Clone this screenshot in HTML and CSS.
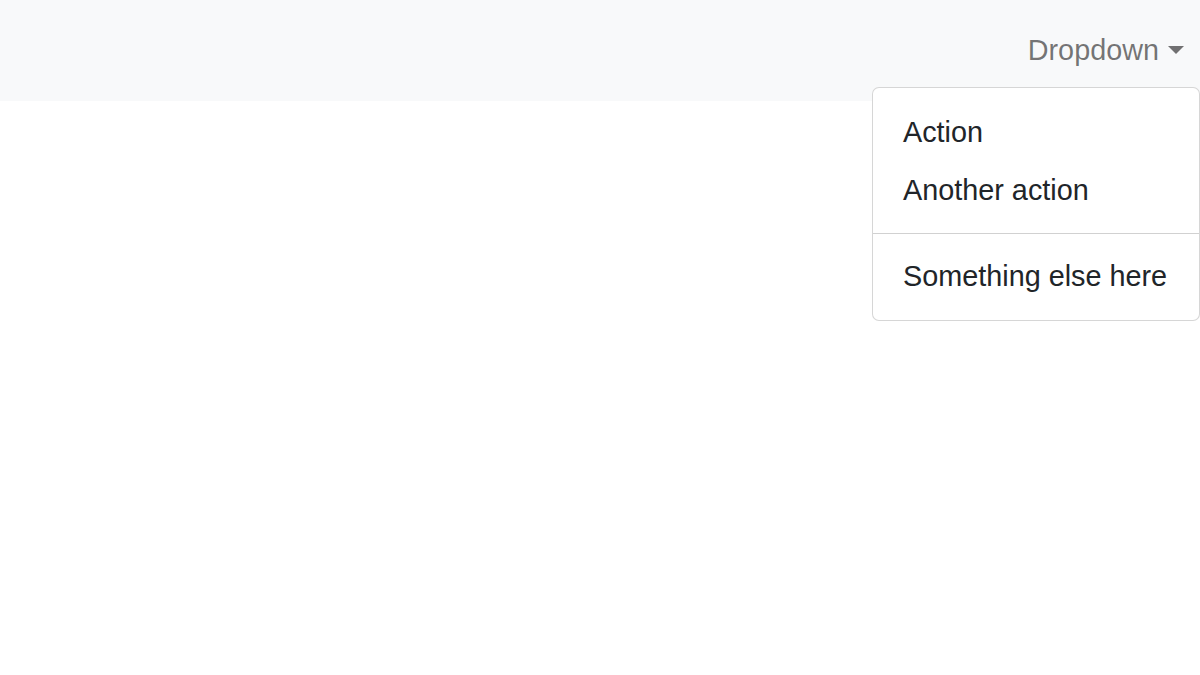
FILE: index.html
```html
<!DOCTYPE html>
<html lang="en">
<head>
<meta charset="utf-8">
<title>Dropdown</title>
<link rel="stylesheet" href="styles.css">
</head>
<body>
<div class="page">
  <nav class="navbar">
    <a class="nav-link dropdown-toggle" href="#">Dropdown</a>
  </nav>
  <div class="dropdown-menu">
    <a class="dropdown-item" href="#">Action</a>
    <a class="dropdown-item" href="#">Another action</a>
    <div class="dropdown-divider"></div>
    <a class="dropdown-item" href="#">Something else here</a>
  </div>
</div>
</body>
</html>
```

FILE: styles.css
```css
html, body {
  margin: 0;
  padding: 0;
  background: #ffffff;
}

body {
  font-family: "Liberation Sans", Arial, sans-serif;
  font-size: 28.8px;
  line-height: 1.5;
  color: #212529;
}

.page {
  position: relative;
  width: 1200px;
  height: 675px;
}

.navbar {
  background: #f8f9fa;
  height: 101px;
  padding: 14.4px 0;
  box-sizing: border-box;
  display: flex;
  justify-content: flex-end;
  align-items: center;
}

.nav-link {
  display: flex;
  align-items: center;
  padding: 14.4px 16px 14.4px 14.4px;
  color: rgba(0, 0, 0, 0.55);
  text-decoration: none;
}

.dropdown-toggle::after {
  content: "";
  display: inline-block;
  margin-left: 9px;
  border-top: 8.6px solid;
  border-left: 8.2px solid transparent;
  border-right: 8.2px solid transparent;
  border-bottom: 0;
  position: relative;
  top: -1px;
}

.dropdown-menu {
  position: absolute;
  top: 87px;
  right: 0;
  z-index: 10;
  padding: 15.9px 0 14.4px;
  background: #ffffff;
  border: 1px solid rgba(0, 0, 0, 0.16);
  border-radius: 7px;
  white-space: nowrap;
  min-width: 326px;
  display: flex;
  flex-direction: column;
}

.dropdown-item {
  display: block;
  padding: 7.2px 30px;
  color: #212529;
  text-decoration: none;
}

.dropdown-divider {
  height: 0;
  margin: 13.6px 0 14.4px;
  border-top: 1px solid rgba(0, 0, 0, 0.18);
}
```
